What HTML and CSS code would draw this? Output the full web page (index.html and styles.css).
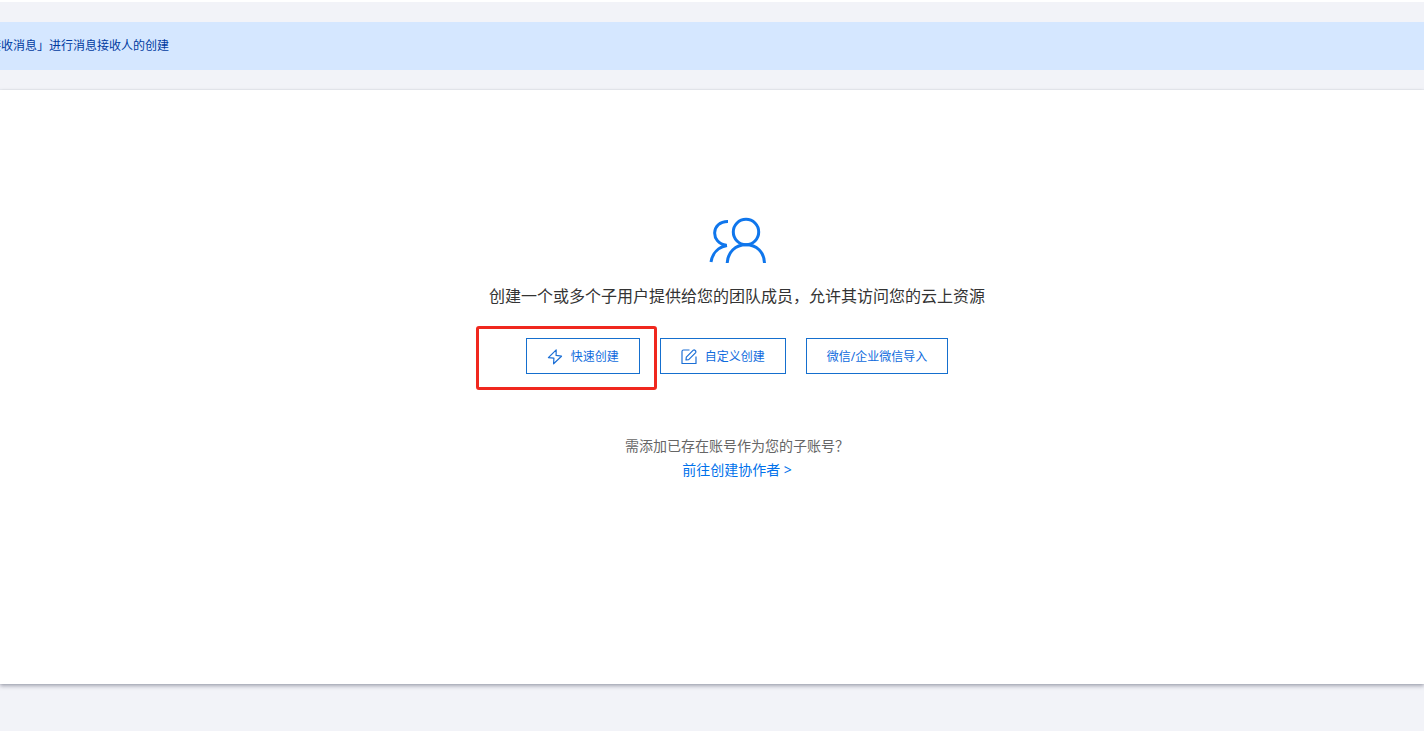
FILE: index.html
```html
<!DOCTYPE html>
<html lang="zh-CN">
<head>
<meta charset="utf-8">
<title>创建子用户</title>
<link rel="stylesheet" href="styles.css">
</head>
<body>
<div class="notice"><p class="notice-text">接收消息」进行消息接收人的创建</p></div>
<main class="card">
  <svg class="users-icon" viewBox="0 0 58 48" aria-hidden="true">
    <circle cx="38" cy="15" r="12.7"/>
    <path d="M19.200 46C19.800 35 27.500 27.700 38 27.700S56.200 35 56.500 46M20 4.400C3 4.200 2 26.200 18.500 28.300M19 28.600C10.500 30 4.500 36 3 45"/>
  </svg>
  <h1 class="title">创建一个或多个子用户提供给您的团队成员，允许其访问您的云上资源</h1>
  <div class="actions">
    <div class="marked">
      <button class="btn" type="button">
        <svg class="btn-icon" viewBox="0 0 16 16" aria-hidden="true"><path d="M9.200 .8 1.400 8.600 6.900 9.200 6.600 14.800 14.500 7.200 9.100 6.400Z"/></svg>
        <span>快速创建</span>
      </button>
      <span class="marker"></span>
    </div>
    <button class="btn" type="button">
      <svg class="btn-icon" viewBox="0 0 16 16" aria-hidden="true"><path d="M8.500 1H2.500Q1 1 1 2.500V14.500H15V7.500M5 11 5.300 8.200 12.300 1.200Q13.200 .6 14.200 1.500T14.700 3.600L7.700 10.600Z"/></svg>
      <span>自定义创建</span>
    </button>
    <button class="btn" type="button">微信/企业微信导入</button>
  </div>
  <p class="hint">需添加已存在账号作为您的子账号？</p>
  <a class="link" href="#">前往创建协作者 &gt;</a>
</main>
</body>
</html>
```
FILE: styles.css
```css
* { box-sizing: border-box; }
body {
  margin: 0;
  min-height: 100vh;
  display: flex;
  flex-direction: column;
  border-top: 2px solid #fff;
  padding: 20px 0 47px;
  background: #f2f3f8;
  font-family: "Noto Sans", "Noto Sans CJK SC", sans-serif;
  color: #333;
}
.notice {
  padding: 14px 0;
  background: #d5e7ff;
  overflow: hidden;
}
.notice-text {
  margin: 0 0 0 -11px;
  font-size: 12px;
  line-height: 20px;
  color: #003b9f;
}
.card {
  flex: 1;
  display: flex;
  flex-direction: column;
  align-items: center;
  margin-top: 20px;
  padding: 127px 0 120px 50px;
  background: #fff;
  box-shadow: 0 2px 4px rgba(54, 58, 80, .42), 0 0 1px rgba(54, 58, 80, .2);
}
.users-icon {
  width: 58px;
  height: 48px;
  fill: none;
  stroke: #0f76ec;
  stroke-width: 3;
}
.title {
  margin: 19px 0 0;
  font-size: 16px;
  font-weight: 400;
  line-height: 24px;
}
.actions {
  display: flex;
  gap: 20px;
  margin-top: 30px;
}
.marked { position: relative; }
.marker {
  position: absolute;
  inset: -12px -17px -16px -50px;
  border: 3px solid #f0281e;
  border-radius: 3px;
  pointer-events: none;
}
.btn {
  display: flex;
  align-items: center;
  gap: 8px;
  height: 36px;
  padding: 2px 20px 0;
  border: 1px solid #156fce;
  background: #fff;
  color: #0f6bdd;
  font-family: inherit;
  font-size: 12px;
  line-height: 20px;
}
.btn-icon {
  width: 16px;
  height: 16px;
  fill: none;
  stroke: #1b6fd6;
  stroke-width: 1.2;
  stroke-linejoin: round;
}
.hint {
  margin: 60px 0 0;
  font-size: 14px;
  line-height: 24px;
  color: #666;
}
.link {
  font-size: 14px;
  line-height: 24px;
  color: #0071eb;
  text-decoration: none;
}
```
